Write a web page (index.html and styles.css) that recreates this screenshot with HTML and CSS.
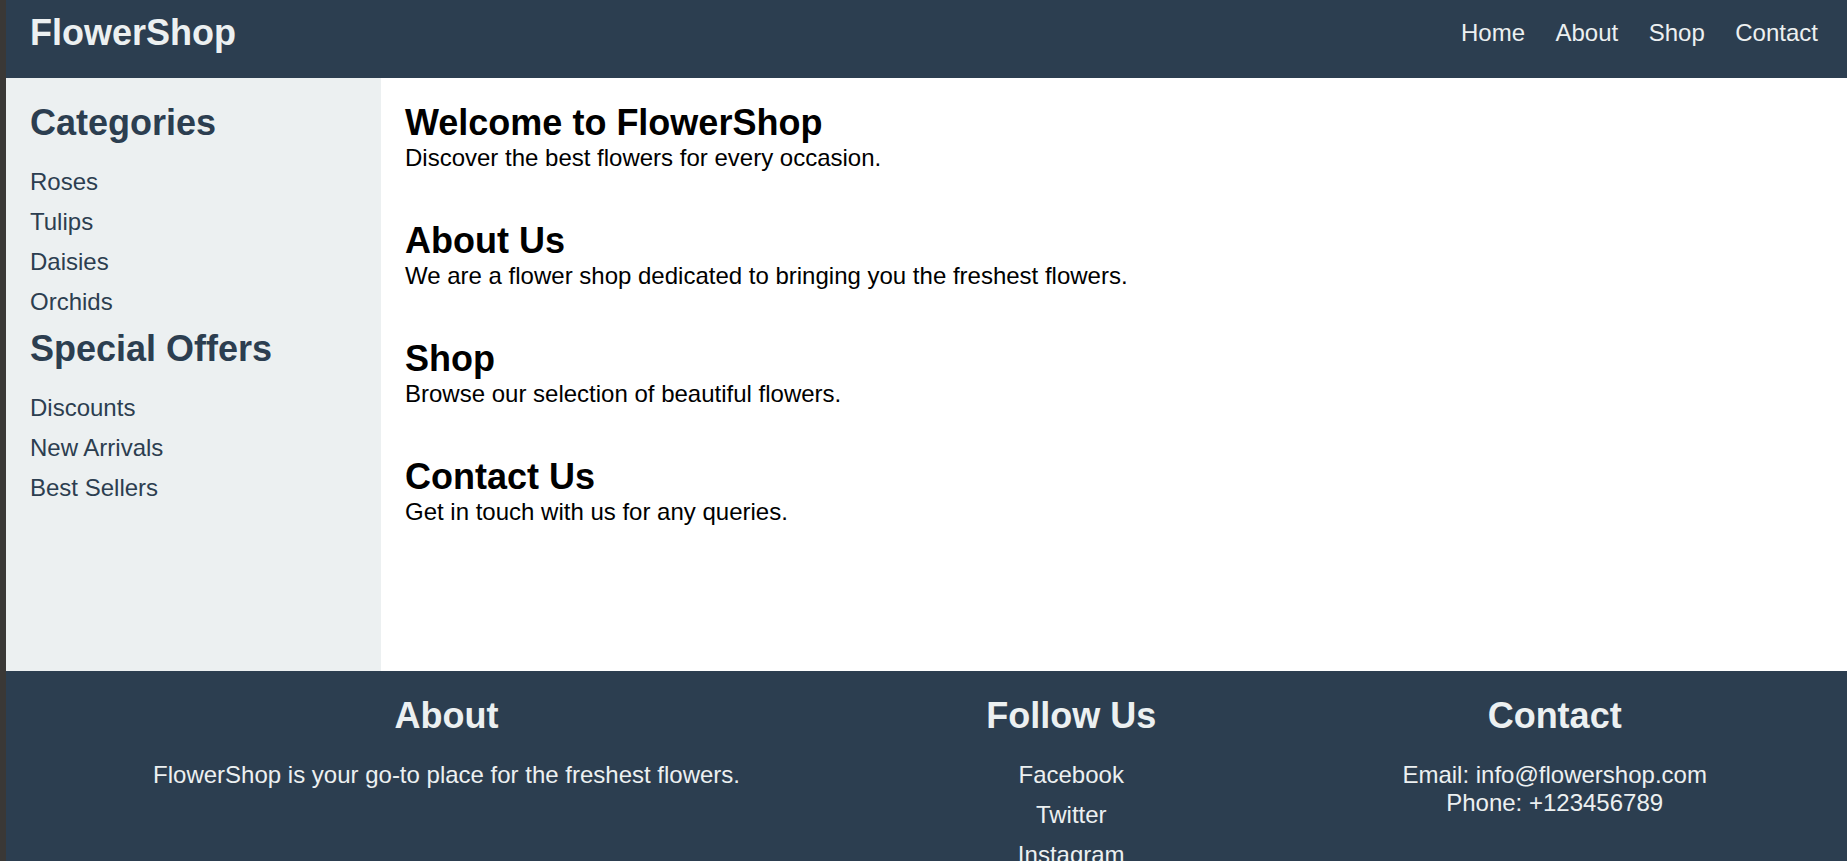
FILE: index.html
```html
<!DOCTYPE html>
<html lang="en">
<head>
<meta charset="utf-8">
<title>FlowerShop</title>
<link rel="stylesheet" href="styles.css">
</head>
<body>
<div class="page">
  <header class="site-header">
    <div class="logo">FlowerShop</div>
    <nav>
      <ul class="nav-list">
        <li><a href="#">Home</a></li>
        <li><a href="#">About</a></li>
        <li><a href="#">Shop</a></li>
        <li><a href="#">Contact</a></li>
      </ul>
    </nav>
  </header>
  <div class="container">
    <aside class="sidebar">
      <h2>Categories</h2>
      <ul>
        <li><a href="#">Roses</a></li>
        <li><a href="#">Tulips</a></li>
        <li><a href="#">Daisies</a></li>
        <li><a href="#">Orchids</a></li>
      </ul>
      <h2>Special Offers</h2>
      <ul>
        <li><a href="#">Discounts</a></li>
        <li><a href="#">New Arrivals</a></li>
        <li><a href="#">Best Sellers</a></li>
      </ul>
    </aside>
    <main class="content">
      <section>
        <h2>Welcome to FlowerShop</h2>
        <p>Discover the best flowers for every occasion.</p>
      </section>
      <section>
        <h2>About Us</h2>
        <p>We are a flower shop dedicated to bringing you the freshest flowers.</p>
      </section>
      <section>
        <h2>Shop</h2>
        <p>Browse our selection of beautiful flowers.</p>
      </section>
      <section>
        <h2>Contact Us</h2>
        <p>Get in touch with us for any queries.</p>
      </section>
    </main>
  </div>
  <footer class="site-footer">
    <div class="footer-col">
      <h2>About</h2>
      <p>FlowerShop is your go-to place for the freshest flowers.</p>
    </div>
    <div class="footer-col">
      <h2>Follow Us</h2>
      <ul>
        <li><a href="#">Facebook</a></li>
        <li><a href="#">Twitter</a></li>
        <li><a href="#">Instagram</a></li>
      </ul>
    </div>
    <div class="footer-col">
      <h2>Contact</h2>
      <p>Email: info@flowershop.com<br>Phone: +123456789</p>
    </div>
  </footer>
</div>
</body>
</html>
```
FILE: styles.css
```css
html, body {
  margin: 0;
  padding: 0;
}

body {
  background: #3a3836;
  padding-left: 6px;
  font-family: "Liberation Sans", Arial, sans-serif;
  font-size: 24px;
  color: #000;
}

.page {
  background: #fff;
}

a {
  color: inherit;
  text-decoration: none;
}

ul {
  list-style: none;
  margin: 0;
  padding: 0;
}

h2 {
  font-size: 36px;
  font-weight: bold;
  margin: 0;
}

p {
  margin: 0;
}

/* Header */
.site-header {
  box-sizing: border-box;
  height: 78px;
  background: #2c3e50;
  color: #ecf0f1;
  display: flex;
  justify-content: space-between;
  align-items: center;
  padding: 0 29px 12px 24px;
}

.logo {
  font-size: 36px;
  font-weight: bold;
}

.nav-list {
  display: flex;
  gap: 30.5px;
}

/* Body area */
.container {
  display: flex;
  min-height: 593px;
}

.sidebar {
  width: 375px;
  flex-shrink: 0;
  box-sizing: border-box;
  background: #ecf0f1;
  color: #2c3e50;
  padding: 23.5px 24px;
}

.sidebar h2 {
  margin-bottom: 24px;
}

.sidebar li {
  margin-bottom: 12px;
}

.content {
  flex: 1;
  padding: 23.5px 24px;
}

.content section {
  margin-bottom: 48.2px;
}

.content section:last-child {
  margin-bottom: 0;
}

/* Footer */
.site-footer {
  background: #2c3e50;
  color: #ecf0f1;
  display: flex;
  padding: 24px 17px 24px 24px;
}

.footer-col {
  flex: 1 1 auto;
  text-align: center;
}

.footer-col h2 {
  margin-bottom: 24px;
}

.footer-col li {
  margin-bottom: 12px;
}
```
